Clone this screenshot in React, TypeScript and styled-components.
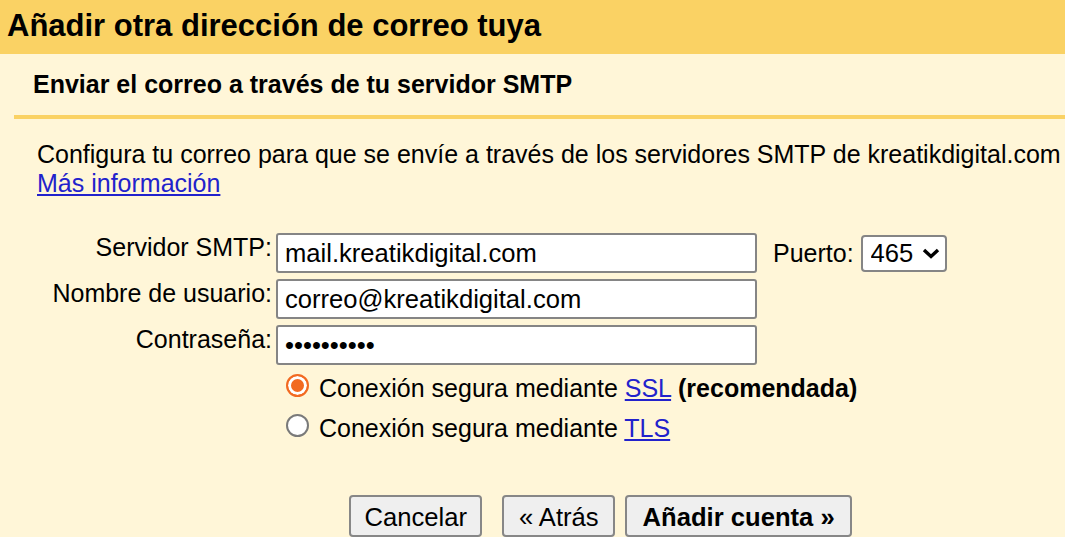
import React from "react";
import styled, { createGlobalStyle } from "styled-components";

const GlobalStyle = createGlobalStyle`
  html, body {
    margin: 0;
    padding: 0;
    background: #fff6d8;
    font-family: "Liberation Sans", Arial, sans-serif;
    color: #000;
  }
`;

const Page = styled.div`
  width: 1065px;
  height: 537px;
  overflow: hidden;
  background: #fff6d8;
`;

const Header = styled.div`
  box-sizing: border-box;
  height: 54px;
  padding: 8px 0 0 7px;
  background: #fad264;
`;

const Title = styled.h1`
  margin: 0;
  font-size: 31px;
  line-height: 36px;
  font-weight: bold;
`;

const SubSection = styled.div`
  padding-left: 14px;
`;

const SubTitle = styled.h2`
  margin: 0;
  padding: 16px 0 16px 19px;
  border-bottom: 4px solid #fad264;
  font-size: 25px;
  line-height: 29px;
  font-weight: bold;
`;

const Content = styled.div`
  padding: 21px 0 0 37px;
`;

const Intro = styled.p`
  margin: 0;
  font-size: 25px;
  line-height: 29px;
  white-space: nowrap;
`;

const Link = styled.a`
  color: #2222cc;
  text-decoration: underline;
  cursor: pointer;
`;

const FormGrid = styled.div`
  display: grid;
  grid-template-columns: 235px 481px auto;
  column-gap: 4px;
  row-gap: 6px;
  margin-top: 35px;
  align-items: start;
`;

const Label = styled.label`
  font-size: 25px;
  line-height: 29px;
  text-align: right;
  white-space: nowrap;
`;

const TextInput = styled.input`
  box-sizing: border-box;
  width: 481px;
  height: 40px;
  margin: 0;
  padding: 0 7px;
  border: 2px solid #858585;
  border-radius: 3px;
  background: #fff;
  font-family: "Liberation Sans", Arial, sans-serif;
  font-size: 25.6px;
  color: #000;
  outline: none;
`;

const PortCell = styled.div`
  display: flex;
  align-items: center;
  align-self: center;
  gap: 7px;
  margin-left: 12px;
`;

const PortLabel = styled.label`
  font-size: 25px;
  line-height: 29px;
`;

const SelectWrap = styled.div`
  position: relative;
  width: 86px;
  height: 37px;
`;

const Select = styled.select`
  appearance: none;
  box-sizing: border-box;
  width: 86px;
  height: 37px;
  margin: 0;
  padding: 0 0 0 8px;
  border: 2px solid #858585;
  border-radius: 4px;
  background: #fff;
  font-family: "Liberation Sans", Arial, sans-serif;
  font-size: 25.6px;
  color: #000;
  outline: none;
`;

const Chevron = styled.svg`
  position: absolute;
  left: 61px;
  top: 13px;
  pointer-events: none;
`;

const Radios = styled.div`
  display: flex;
  flex-direction: column;
  gap: 11px;
  margin: 9px 0 0 249px;
`;

const RadioRow = styled.label`
  display: flex;
  align-items: flex-start;
  gap: 10px;
  font-size: 25px;
  line-height: 29px;
  white-space: nowrap;
`;

const Radio = styled.input`
  appearance: none;
  box-sizing: border-box;
  width: 23px;
  height: 23px;
  margin: 0;
  border-radius: 50%;
  border: 2px solid #7a7a7a;
  background: #fff;
  flex: none;

  &:checked {
    border: 2px solid #f26a22;
    background: #f26a22;
    box-shadow: inset 0 0 0 3px #fff;
  }
`;

const Buttons = styled.div`
  display: flex;
  margin: 52px 0 0 312px;
`;

const Button = styled.button<{ $primary?: boolean; $gap: number; $pad: number }>`
  box-sizing: border-box;
  height: 42px;
  margin: 0 ${(p) => p.$gap}px 0 0;
  padding: 3px ${(p) => p.$pad}px 0;
  border: 2px solid #878787;
  border-radius: 4px;
  background: #efefef;
  font-family: "Liberation Sans", Arial, sans-serif;
  font-size: 25.6px;
  font-weight: ${(p) => (p.$primary ? "bold" : "normal")};
  color: #000;
  white-space: nowrap;
  cursor: pointer;
`;

export default function App() {
  return (
    <Page>
      <GlobalStyle />
      <Header>
        <Title>Añadir otra dirección de correo tuya</Title>
      </Header>
      <SubSection>
        <SubTitle>Enviar el correo a través de tu servidor SMTP</SubTitle>
      </SubSection>
      <Content>
        <Intro>
          Configura tu correo para que se envíe a través de los servidores SMTP de kreatikdigital.com
          <br />
          <Link>Más información</Link>
        </Intro>
        <FormGrid>
          <Label htmlFor="smtp">Servidor SMTP:</Label>
          <TextInput id="smtp" type="text" defaultValue="mail.kreatikdigital.com" />
          <PortCell>
            <PortLabel htmlFor="port">Puerto:</PortLabel>
            <SelectWrap>
              <Select id="port" defaultValue="465">
                <option value="465">465</option>
                <option value="587">587</option>
                <option value="25">25</option>
              </Select>
              <Chevron width="18" height="11" viewBox="0 0 18 11">
                <path d="M2 2 L9 8.5 L16 2" fill="none" stroke="#000" strokeWidth="3.4" />
              </Chevron>
            </SelectWrap>
          </PortCell>
          <Label htmlFor="user">Nombre de usuario:</Label>
          <TextInput id="user" type="text" defaultValue="correo@kreatikdigital.com" />
          <span />
          <Label htmlFor="pass">Contraseña:</Label>
          <TextInput id="pass" type="password" defaultValue="abcdefghij" />
          <span />
        </FormGrid>
        <Radios>
          <RadioRow>
            <Radio type="radio" name="sec" defaultChecked />
            <span>
              Conexión segura mediante <Link>SSL</Link> <b>(recomendada)</b>
            </span>
          </RadioRow>
          <RadioRow>
            <Radio type="radio" name="sec" />
            <span>
              Conexión segura mediante <Link>TLS</Link>
            </span>
          </RadioRow>
        </Radios>
        <Buttons>
          <Button $gap={20} $pad={13.5}>Cancelar</Button>
          <Button $gap={10} $pad={14.5}>« Atrás</Button>
          <Button $primary $gap={0} $pad={15.5}>Añadir cuenta »</Button>
        </Buttons>
      </Content>
    </Page>
  );
}
